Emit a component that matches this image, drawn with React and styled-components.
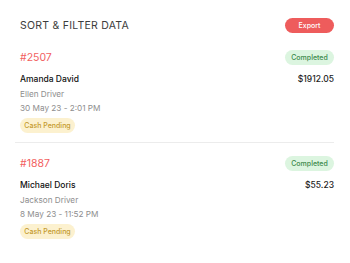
import React from "react";
import styled, { createGlobalStyle } from "styled-components";

const Global = createGlobalStyle`
  html, body { margin: 0; padding: 0; background: #fff; }
  body { font-family: Inter, "Noto Sans", sans-serif; -webkit-font-smoothing: antialiased; }
`;

const Card = styled.div`
  width: 350px;
  height: 263px;
  box-sizing: border-box;
  padding: 18px 16px 0 15px;
  background: #fff;
`;

const Header = styled.div`
  display: flex;
  align-items: center;
  justify-content: space-between;
  padding-left: 5px;
  height: 15px;
  margin-bottom: 4px;
`;

const Title = styled.h1`
  margin: 0;
  font-size: 10.5px;
  font-weight: 400;
  color: #3c3c3c;
  letter-spacing: 0.25px;
  text-transform: uppercase;
`;

const Pill = styled.span`
  display: inline-flex;
  align-items: center;
  justify-content: center;
  height: 15px;
  min-width: ${(p) => p.$w || 49}px;
  border-radius: 8px;
  font-size: 7px;
  font-weight: 500;
  background: ${(p) => p.$bg};
  color: ${(p) => p.$fg};
  box-sizing: border-box;
`;

const Order = styled.div`
  padding: 13px 0 9px 5px;
  border-bottom: ${(p) => (p.$last ? "none" : "1px solid #ececec")};
`;

const Row = styled.div`
  display: flex;
  align-items: center;
  justify-content: space-between;
  margin-top: ${(p) => p.$mt || 0}px;
  height: ${(p) => p.$h || 12}px;
`;

const Code = styled.span`
  font-size: 10.5px;
  color: #f2615f;
`;

const Name = styled.span`
  font-size: 8.5px;
  font-weight: 500;
  color: #111;
`;

const Amount = styled.span`
  font-size: 8.5px;
  font-weight: 500;
  color: #222;
`;

const Muted = styled.div`
  font-size: 8.2px;
  color: #8e8e8e;
  line-height: 12px;
  margin-top: ${(p) => p.$mt || 0}px;
`;

const BadgeWrap = styled.div`
  margin-top: 4px;
  display: flex;
`;

const orders = [
  { code: "#2507", name: "Amanda David", amount: "$1912.05", driver: "Ellen Driver", date: "30 May 23 - 2:01 PM" },
  { code: "#1887", name: "Michael Doris", amount: "$55.23", driver: "Jackson Driver", date: "8 May 23 - 11:52 PM" },
];

export default function App() {
  return (
    <>
      <Global />
      <Card>
        <Header>
          <Title>Sort &amp; Filter Data</Title>
          <Pill $bg="#ee5c5c" $fg="#fff">Export</Pill>
        </Header>
        {orders.map((o, i) => (
          <Order key={o.code} $last={i === orders.length - 1}>
            <Row $h={15}>
              <Code>{o.code}</Code>
              <Pill $bg="#dcf5e0" $fg="#3d8a4c">Completed</Pill>
            </Row>
            <Row $mt={8}>
              <Name>{o.name}</Name>
              <Amount>{o.amount}</Amount>
            </Row>
            <Muted $mt={3}>{o.driver}</Muted>
            <Muted $mt={2}>{o.date}</Muted>
            <BadgeWrap>
              <Pill $w={55} $bg="#fcf1cf" $fg="#c49a2c">Cash Pending</Pill>
            </BadgeWrap>
          </Order>
        ))}
      </Card>
    </>
  );
}
